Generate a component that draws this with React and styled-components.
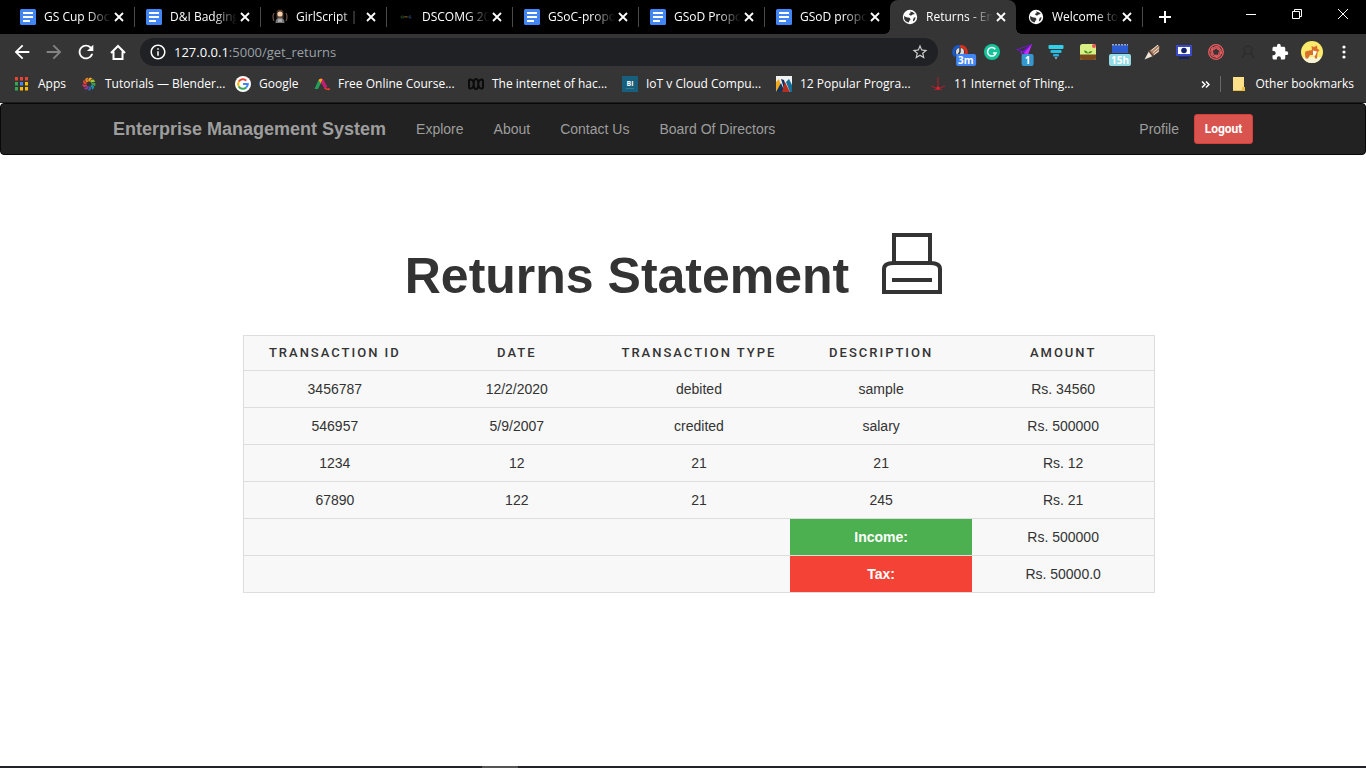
import React from "react"
import styled, { createGlobalStyle, css } from "styled-components"
import {
  MdArrowBack,
  MdArrowForward,
  MdExtension,
  MdInfoOutline,
  MdOutlineHome,
  MdRefresh,
  MdStarBorder,
} from "react-icons/md"

const GlobalStyle = createGlobalStyle`
  * {
    box-sizing: border-box;
  }

  body {
    margin: 0;
    background: #fff;
    color: #333;
    font-family: "Liberation Sans", Arial, sans-serif;
    font-size: 14px;
    line-height: 20px;
  }

  svg {
    flex: none;
  }
`

const Screen = styled.div`
  min-height: 100vh;
  display: flex;
  flex-direction: column;
`

/* browser frame */

const Browser = styled.header`
  background: #353535;
  border-bottom: 1px solid #1c1c1c;
  color: #fff;
  font-family: "Open Sans", "Noto Sans", sans-serif;
  font-size: 12px;
  line-height: 16px;
`

const IconButton = styled.button`
  display: flex;
  align-items: center;
  justify-content: center;
  flex: none;
  width: ${(p) => p.$width || 16}px;
  height: ${(p) => p.$height || 16}px;
  padding: 0;
  border: 0;
  background: transparent;
  color: ${(p) => p.$color || "#fff"};
`

const TabStrip = styled.div`
  display: flex;
  height: 34px;
  padding-left: 8px;
  background: #000;
`

const Tab = styled.div`
  position: relative;
  display: flex;
  align-items: center;
  flex: 0 1 126px;
  min-width: 0;
  padding: 0 7px 0 12px;

  &::after {
    content: "";
    position: absolute;
    right: -1px;
    top: 7px;
    width: 1px;
    height: 20px;
    background: ${(p) => (p.$noLine ? "transparent" : "#4a4a4a")};
  }

  ${(p) =>
    p.$active &&
    css`
      background: #353535;
      border-radius: 8px 8px 0 0;

      &::before,
      &::after {
        content: "";
        position: absolute;
        top: auto;
        bottom: 0;
        width: 6px;
        height: 6px;
      }

      &::before {
        left: -6px;
        background: radial-gradient(circle at 0 0, transparent 6px, #353535 6px);
      }

      &::after {
        right: -6px;
        background: radial-gradient(circle at 100% 0, transparent 6px, #353535 6px);
      }
    `}
`

const TabTitle = styled.span`
  flex: 1;
  min-width: 0;
  margin-left: 8px;
  overflow: hidden;
  white-space: nowrap;
  mask-image: linear-gradient(to right, #000 65%, transparent 100%);
`

const WindowButtons = styled.div`
  display: flex;
  height: 28px;
  margin-left: auto;
`

const Toolbar = styled.div`
  display: flex;
  align-items: center;
  height: 36px;
  padding: 0 14px;
`

const NavButtons = styled.div`
  display: flex;
  gap: 16px;
  margin-right: 14px;
`

const AddressBar = styled.div`
  display: flex;
  align-items: center;
  flex: 1;
  height: 28px;
  padding: 0 10px;
  border-radius: 14px;
  background: #202124;
`

const Address = styled.div`
  flex: 1;
  margin-left: 8px;
  font-size: 13px;
  line-height: 20px;
  color: #9aa0a6;

  b {
    font-weight: 400;
    color: #fff;
  }
`

const Extensions = styled.div`
  display: flex;
  align-items: center;
  gap: 16px;
  margin-left: 14px;
`

const Extension = styled.div`
  position: relative;
  display: flex;
  align-items: center;
  justify-content: center;
  width: 16px;
  height: 16px;
`

const Badge = styled.span`
  position: absolute;
  top: 10px;
  left: 50%;
  min-width: 12px;
  padding: 0 2px;
  border-radius: 2px;
  background: ${(p) => p.$color};
  font-size: 10px;
  font-weight: 700;
  line-height: 12px;
  text-align: center;
  transform: translateX(${(p) => (p.$wide ? "-50%" : "-20%")});
`

const Bookmarks = styled.nav`
  display: flex;
  align-items: center;
  height: 32px;
  padding: 0 12px 4px 14px;
`

const Bookmark = styled.a`
  display: flex;
  align-items: center;
  flex: none;
  gap: 8px;
  width: ${(p) => (p.$width ? `${p.$width}px` : "auto")};
  color: #fff;
  text-decoration: none;
  white-space: nowrap;
`

const BookmarksEnd = styled.div`
  display: flex;
  align-items: center;
  gap: 10px;
  margin-left: auto;
`

const Line = styled.span`
  width: 1px;
  height: 16px;
  background: #686868;
`

/* site */

const Navbar = styled.nav`
  border: 1px solid #080808;
  border-radius: 4px;
  background: #222;
`

const NavbarInner = styled.div`
  display: flex;
  align-items: center;
  max-width: 1170px;
  height: 50px;
  margin: 0 auto;
  padding: 0 15px;
`

const Brand = styled.a`
  margin-right: 30px;
  color: #9d9d9d;
  font-size: 18px;
  font-weight: 700;
  text-decoration: none;
`

const NavLinks = styled.div`
  display: flex;
  flex: 1;
  gap: 30px;
`

const NavLink = styled.a`
  color: #9d9d9d;
  text-decoration: none;
`

const Logout = styled.button`
  width: 59px;
  height: 30px;
  margin-left: 15px;
  padding: 0;
  border: 1px solid #d43f3a;
  border-radius: 3px;
  background: #d9534f;
  color: #fff;
  font-family: Roboto, sans-serif;
  font-size: 12px;
  font-weight: 700;
  line-height: 18px;
`

const Main = styled.main`
  flex: 1;
  width: 100%;
  max-width: 1172px;
  margin: 0 auto;
  padding: 75px 0 0 32px;
`

const Heading = styled.div`
  display: flex;
  align-items: flex-end;
  justify-content: center;
  gap: 32px;
  height: 64px;
  margin-right: 50px;
`

const Title = styled.h1`
  margin: 0 0 -10px;
  font-size: 50px;
  font-weight: 700;
  line-height: 55px;
`

const Statement = styled.table`
  width: 80%;
  margin: 41px auto 0;
  table-layout: fixed;
  border-collapse: collapse;
  border: 1px solid #ddd;
  background: #f8f8f8;
  text-align: center;
`

const Row = styled.tr`
  border-top: 1px solid #ddd;
`

const HeadCell = styled.th`
  padding: 8px 0;
  font-family: Roboto, sans-serif;
  font-size: 13px;
  font-weight: 500;
  line-height: 18px;
  letter-spacing: 2px;
  text-transform: uppercase;
  white-space: nowrap;
`

const Cell = styled.td`
  padding: 8px;
`

const TotalCell = styled.th`
  padding: 8px;
  background: ${(p) => p.$color};
  color: #fff;
`

const Taskbar = styled.footer`
  display: flex;
  height: 2px;
  padding-left: 482px;
  background: #222326;

  &::before {
    content: "";
    width: 36px;
    background: #555;
  }
`

const Icon = ({ size = 16, box = 16, children }) => (
  <svg width={size} height={size} viewBox={`0 0 ${box} ${box}`} fill="none" aria-hidden="true">
    {children}
  </svg>
)

const DocIcon = () => (
  <Icon>
    <rect width="16" height="16" rx="1.5" fill="#4285f4" />
    <path d="M3 4h10M3 8h10M3 12h7" stroke="#fff" strokeWidth="1.8" />
  </Icon>
)

const GirlIcon = () => (
  <Icon>
    <path d="M2 4q-2 4 0 8M14 4q2 4 0 8" stroke="#6b5248" strokeWidth="1.2" />
    <path d="M4.500 9V4q0-3.500 3.500-3.500T11.500 4v5z" fill="#513529" />
    <circle cx="8" cy="5" r="2.600" fill="#f3d0aa" />
    <path d="M3.500 14q0-5.500 4.500-5.500t4.500 5.500z" fill="#777" />
    <path d="M6 10h4v3H6z" fill="#a9a9a9" />
  </Icon>
)

const OmgIcon = () => (
  <Icon>
    <ellipse cx="4.500" cy="8" rx="1.600" ry="1" stroke="#24482a" />
    <path d="M7 9V7l1 1 1-1v2" stroke="#5c4518" />
    <path d="M13 7h-2v2h2V8" stroke="#213963" />
  </Icon>
)

const GlobeIcon = () => (
  <Icon>
    <circle cx="8" cy="8" r="7.200" fill="#fff" />
    <path d="M2.300 6.800q1.500 2 3.700 1.800 2 0 2.400 1.300.2 1.500-1 1.700l-.6 2q-3.800-.4-4.700-4z" fill="#333" />
    <path d="M8 2.400q3.300-.1 4.900 2.600l-2.300.4q-.5 1.200-2.200 1.100L7 5.600q.2-1.200 1.800-1.500z" fill="#333" />
    <path d="M13.600 8.200q-.2 2.800-2.300 4.400-.8-1.400.1-2.600 0-1.300 1-1.600z" fill="#333" />
  </Icon>
)

const CloseIcon = () => (
  <Icon size={10} box={10}>
    <path d="M1 1l8 8M9 1L1 9" stroke="#fff" strokeWidth="1.8" />
  </Icon>
)

const BlenderIcon = () => (
  <Icon>
    {["#f7a325", "#a7cf38", "#43a047", "#1c95a6", "#2f69b2", "#8b3b9b", "#d92f68", "#e8452d", "#f08a24"].map(
      (color, i) => (
        <path key={color} d="M7.500 5.500Q6.500 3 9 1.500l2.500 1Q9 3.500 9.200 5.500z" fill={color} transform={`rotate(${i * 40} 8 8)`} />
      )
    )}
  </Icon>
)

const GoogleIcon = () => (
  <Icon>
    <circle cx="8" cy="8" r="8" fill="#fff" />
    <path d="M3.800 5.600A4.800 4.800 0 0 1 11.300 4.600" stroke="#ea4335" strokeWidth="2" />
    <path d="M3.800 10.400a4.800 4.800 0 0 1 0-4.800" stroke="#fbbc05" strokeWidth="2" />
    <path d="M11.200 11.500a4.800 4.800 0 0 1-7.400-1.100" stroke="#34a853" strokeWidth="2" />
    <path d="M8 8h4.800q0 2.200-1.600 3.500" stroke="#4285f4" strokeWidth="2" />
  </Icon>
)

const ArchIcon = () => (
  <Icon>
    <path d="M.5 13L4.500 4l2.500 3-3 6z" fill="#22a05a" />
    <path d="M4.500 4Q6 2 8.500 3L7 7.500z" fill="#f6b51e" />
    <path d="M5.500 3q3-1.500 4.500 1.500l3.500 6.500-3 1.500L6.500 6z" fill="#c21e72" />
    <path d="M5 3.500q2-1.500 3.500 0L6.500 7z" fill="#f4a81e" />
    <path d="M10.500 11.500q2.500 1.500 5 .5l.5 2q-3.500.5-5.500-1z" fill="#ef3b2c" />
  </Icon>
)

const WavesIcon = () => (
  <Icon>
    <path
      d="M1 3.500Q5.700 3 5.700 8T8 13t2.300-5T15 3.500M1 12.500Q5.700 13 5.700 8T8 3t2.300 5T15 12.500M1 3.500v9M15 3.500v9"
      stroke="#0b0b0b"
      strokeWidth="2"
    />
  </Icon>
)

const BiIcon = () => (
  <Icon>
    <rect width="16" height="16" fill="#185f7d" />
    <text x="8" y="10" fill="#fff" fontSize="7" fontWeight="700" textAnchor="middle">
      BI
    </text>
    <path d="M4 12.500h8" stroke="#3d7b94" />
  </Icon>
)

const PeaksIcon = () => (
  <Icon>
    <rect width="16" height="16" fill="#f1f1f1" />
    <path d="M0 6l3-3 4 13H0z" fill="#f2a922" />
    <path d="M0 16l5-9 4 9z" fill="#12335e" />
    <path d="M5 3l3 1 4 12H9z" fill="#12335e" />
    <path d="M6 16l3-10 5 10z" fill="#b52d1c" />
    <path d="M10 6l3-3 3 6v7h-2z" fill="#146f9b" />
  </Icon>
)

const StarburstIcon = () => (
  <Icon>
    <path d="M8 1v12M1 10l7 3 7-3M4 14l4-1 4 1" stroke="#b01e2c" />
    <circle cx="8" cy="12" r="1.500" fill="#e8232f" />
  </Icon>
)

const AppsIcon = () => (
  <Icon>
    {["#ea4335", "#ea4335", "#ea4335", "#34a853", "#4285f4", "#fbbc05", "#34a853", "#fbbc05", "#fbbc05"].map(
      (color, i) => (
        <rect key={i} x={(i % 3) * 5 + 1} y={Math.floor(i / 3) * 5 + 1} width="3" height="3.500" fill={color} />
      )
    )}
  </Icon>
)

const FolderIcon = () => (
  <Icon>
    <path d="M2 1h11v14H2z" fill="#ffe18a" />
    <path d="M11 11h3v4h-3z" fill="#e9bf45" />
    <path d="M2 14.500h10" stroke="#e9bf45" />
  </Icon>
)

const PrinterIcon = () => (
  <svg width="62" height="62" viewBox="0 0 62 62" fill="none" stroke="#333" strokeWidth="4" aria-hidden="true">
    <path d="M13 30V3h36v27" />
    <path d="M3 60V37q0-6 10-6h36q10 0 10 6v23z" />
    <path d="M11 48h40" />
  </svg>
)

const tabs = [
  { title: "GS Cup Doc", icon: <DocIcon /> },
  { title: "D&I Badging", icon: <DocIcon /> },
  { title: "GirlScript | Ho", icon: <GirlIcon /> },
  { title: "DSCOMG 20", icon: <OmgIcon /> },
  { title: "GSoC-propo", icon: <DocIcon /> },
  { title: "GSoD Propo", icon: <DocIcon /> },
  { title: "GSoD propo", icon: <DocIcon />, noLine: true },
  { title: "Returns - Ent", icon: <GlobeIcon />, active: true, noLine: true },
  { title: "Welcome to", icon: <GlobeIcon /> },
]

const bookmarks = [
  { title: "Apps", icon: <AppsIcon />, width: 67 },
  { title: "Tutorials — Blender...", icon: <BlenderIcon />, width: 154 },
  { title: "Google", icon: <GoogleIcon />, width: 79 },
  { title: "Free Online Course...", icon: <ArchIcon />, width: 154 },
  { title: "The internet of hac...", icon: <WavesIcon />, width: 154 },
  { title: "IoT v Cloud Compu...", icon: <BiIcon />, width: 154 },
  { title: "12 Popular Progra...", icon: <PeaksIcon />, width: 154 },
  { title: "11 Internet of Thing...", icon: <StarburstIcon />, width: 154 },
]

const columns = ["Transaction ID", "Date", "Transaction Type", "Description", "Amount"]

const transactions = [
  ["3456787", "12/2/2020", "debited", "sample", "Rs. 34560"],
  ["546957", "5/9/2007", "credited", "salary", "Rs. 500000"],
  ["1234", "12", "21", "21", "Rs. 12"],
  ["67890", "122", "21", "245", "Rs. 21"],
]

const totals = [
  { label: "Income:", amount: "Rs. 500000", color: "#4caf50" },
  { label: "Tax:", amount: "Rs. 50000.0", color: "#f44336" },
]

const Avatar = styled.button`
  display: flex;
  margin: 0 -3px;
  padding: 0;
  border: 0;
  background: transparent;
`

const BrowserFrame = () => (
  <Browser>
    <TabStrip>
      {tabs.map((tab) => (
        <Tab key={tab.title} $active={tab.active} $noLine={tab.noLine}>
          {tab.icon}
          <TabTitle>{tab.title}</TabTitle>
          <IconButton aria-label="Close tab">
            <CloseIcon />
          </IconButton>
        </Tab>
      ))}
      <IconButton $width={46} $height={34} aria-label="New tab">
        <Icon size={12} box={12}>
          <path d="M6 0v12M0 6h12" stroke="#fff" strokeWidth="2" />
        </Icon>
      </IconButton>
      <WindowButtons>
        <IconButton $width={46} $height={28} aria-label="Minimize">
          <Icon size={10} box={10}>
            <path d="M0 5.500h10" stroke="#fff" />
          </Icon>
        </IconButton>
        <IconButton $width={46} $height={28} aria-label="Restore">
          <Icon size={10} box={10}>
            <path d="M.5 2.500h7v7h-7zM2.500 2.500v-2h7v7h-2" stroke="#fff" />
          </Icon>
        </IconButton>
        <IconButton $width={46} $height={28} aria-label="Close">
          <Icon size={10} box={10}>
            <path d="M0 0l10 10M10 0L0 10" stroke="#fff" />
          </Icon>
        </IconButton>
      </WindowButtons>
    </TabStrip>

    <Toolbar>
      <NavButtons>
        <IconButton aria-label="Back">
          <MdArrowBack size={22} />
        </IconButton>
        <IconButton $color="#848484" aria-label="Forward">
          <MdArrowForward size={22} />
        </IconButton>
        <IconButton aria-label="Reload">
          <MdRefresh size={22} />
        </IconButton>
        <IconButton aria-label="Home">
          <Icon>
            <path d="M1 9l7-7 7 7M3.500 7.500V15h9V7.500" stroke="#fff" strokeWidth="2" />
          </Icon>
        </IconButton>
      </NavButtons>
      <AddressBar>
        <IconButton aria-label="Site information">
          <MdInfoOutline size={18} />
        </IconButton>
        <Address>
          <b>127.0.0.1</b>:5000/get_returns
        </Address>
        <IconButton $color="#ccc" aria-label="Bookmark this page">
          <MdStarBorder size={18} />
        </IconButton>
      </AddressBar>
      <Extensions>
        <Extension>
          <Icon>
            <path d="M8 2.500A5.500 5.500 0 0 0 3.500 12" stroke="#1a56c4" strokeWidth="3" />
            <path d="M8 2.500A5.500 5.500 0 0 1 12.500 12" stroke="#d2301f" strokeWidth="3" />
            <circle cx="8" cy="8" r="4" fill="#ddd" />
            <path d="M8 4v4L6 11" stroke="#333" strokeWidth="1.500" />
          </Icon>
          <Badge $color="#4285f4">3m</Badge>
        </Extension>
        <Extension>
          <Icon>
            <circle cx="8" cy="8" r="8" fill="#15c39a" />
            <path d="M11.300 5.200A4.300 4.300 0 1 0 12 9H9" stroke="#fff" strokeWidth="1.500" />
          </Icon>
        </Extension>
        <Extension>
          <Icon>
            <path d="M0 5.500L16 0l-4.500 12-3.500-3z" fill="#7a12e8" />
            <path d="M8 9l8-9-4.500 12z" fill="#c531f5" />
            <path d="M2 5.800L14 1.500 6 7.500z" fill="#353535" />
            <path d="M5 7l2 6 2-4" stroke="#8f22ee" strokeWidth="1.200" />
          </Icon>
          <Badge $color="#3498cf">1</Badge>
        </Extension>
        <Extension>
          <Icon>
            <rect x=".5" y="1" width="15" height="4" rx="1" fill="#2ed0ea" />
            <rect x="2.500" y="6" width="11" height="3" rx="1" fill="#2abfe2" />
            <rect x="5" y="10" width="6" height="2.500" rx="1" fill="#2aaedb" />
            <path d="M6.500 13.500h3L8 15.200z" fill="#aeeefa" />
          </Icon>
        </Extension>
        <Extension>
          <Icon>
            <rect width="16" height="16" rx="2.500" fill="#d8ef84" />
            <path d="M0 10.500h16v3q0 2.500-2.500 2.500h-11Q0 16 0 13.500z" fill="#7a4a1e" />
            <path d="M8 9.500Q4.500 9.500 4 6.500q3.500 0 4 3 .5-2.500 4-2.500 0 2.500-4 2.500z" fill="#3f8d25" />
            <circle cx="14" cy="2" r="2" fill="#f0525a" />
          </Icon>
        </Extension>
        <Extension>
          <Icon>
            <path d="M0 1h16v8H0z" fill="#2d5bd0" />
            <path d="M0 .7h16" stroke="#9ba7c6" strokeWidth="1.400" strokeDasharray="2 1" />
          </Icon>
          <Badge $color="#93dce5" $wide>
            15h
          </Badge>
        </Extension>
        <Extension>
          <Icon>
            <path d="M.5 15.500L5 7l4 5z" fill="#f1e4d8" />
            <path d="M5 7l9-6 1.500 1.500L15 8l-6 4z" fill="#a87c5f" />
            <path d="M7.500 6.500L14 1M9 8.500l6-5M10 10.500l5-4" stroke="#f5ece4" />
            <path d="M5 7l4 5" stroke="#5b3f35" strokeWidth="1.500" />
          </Icon>
        </Extension>
        <Extension>
          <Icon>
            <path d="M1 2h14v9H1z" fill="#fff" stroke="#3949c9" strokeWidth="2" />
            <circle cx="8" cy="6.500" r="2.800" fill="#14216e" />
            <path d="M3 14h10" stroke="#14216e" strokeWidth="2" />
          </Icon>
        </Extension>
        <Extension>
          <Icon>
            <circle cx="8" cy="8" r="7.300" stroke="#f15b5f" strokeWidth="1.300" />
            {[0, 72, 144, 216, 288].map((angle) => (
              <path
                key={angle}
                d="M5.500 6.200Q7.500 2.800 11.500 4.500q2.500 1.800 1.800 5.500"
                stroke="#f15b5f"
                strokeWidth="1.100"
                transform={`rotate(${angle} 8 8)`}
              />
            ))}
          </Icon>
        </Extension>
        <Extension>
          <Icon>
            <circle cx="8" cy="6" r="4" stroke="#2d2d2d" strokeWidth="1.500" />
            <path d="M5 9l-3 5M11 9l3 5" stroke="#2d2d2d" strokeWidth="1.500" />
          </Icon>
        </Extension>
        <IconButton aria-label="Extensions">
          <MdExtension size={18} />
        </IconButton>
        <Avatar aria-label="Profile">
          <Icon size={22} box={22}>
            <circle cx="11" cy="11" r="11" fill="#fae96b" />
            <path d="M1.500 16h19q-3 6-9.500 6t-9.500-6z" fill="#f7f3d5" />
            <path d="M4.500 17.500L4 12q0-2 2-2l5-1-.5-4L13 6l3-1.500.5 3.500 2 1-2 2.500-.5 6h-2l-.5-3.500H9L7 17.500z" fill="#d8702b" />
            <path d="M12 9.500l4 1-2 4.500-2-1z" fill="#fff" />
          </Icon>
        </Avatar>
        <IconButton aria-label="Menu">
          <Icon>
            <circle cx="8" cy="3" r="1.600" fill="#fff" />
            <circle cx="8" cy="8" r="1.600" fill="#fff" />
            <circle cx="8" cy="13" r="1.600" fill="#fff" />
          </Icon>
        </IconButton>
      </Extensions>
    </Toolbar>

    <Bookmarks>
      {bookmarks.map((mark) => (
        <Bookmark key={mark.title} href="#" $width={mark.width}>
          {mark.icon}
          {mark.title}
        </Bookmark>
      ))}
      <BookmarksEnd>
        <Icon size={9} box={9}>
          <path d="M1 1.500l3 3-3 3M5 1.500l3 3-3 3" stroke="#fff" strokeWidth="1.500" />
        </Icon>
        <Line />
        <Bookmark href="#">
          <FolderIcon />
          Other bookmarks
        </Bookmark>
      </BookmarksEnd>
    </Bookmarks>
  </Browser>
)

const App = () => (
  <Screen>
    <GlobalStyle />
    <BrowserFrame />
    <Navbar>
      <NavbarInner>
        <Brand href="#">Enterprise Management System</Brand>
        <NavLinks>
          <NavLink href="#">Explore</NavLink>
          <NavLink href="#">About</NavLink>
          <NavLink href="#">Contact Us</NavLink>
          <NavLink href="#">Board Of Directors</NavLink>
        </NavLinks>
        <NavLink href="#">Profile</NavLink>
        <Logout>Logout</Logout>
      </NavbarInner>
    </Navbar>
    <Main>
      <Heading>
        <Title>Returns Statement</Title>
        <PrinterIcon />
      </Heading>
      <Statement>
        <thead>
          <tr>
            {columns.map((name) => (
              <HeadCell key={name} scope="col">
                {name}
              </HeadCell>
            ))}
          </tr>
        </thead>
        <tbody>
          {transactions.map((row) => (
            <Row key={row[0]}>
              {row.map((value, i) => (
                <Cell key={i}>{value}</Cell>
              ))}
            </Row>
          ))}
          {totals.map((total) => (
            <Row key={total.label}>
              <Cell colSpan={3} />
              <TotalCell scope="row" $color={total.color}>
                {total.label}
              </TotalCell>
              <Cell>{total.amount}</Cell>
            </Row>
          ))}
        </tbody>
      </Statement>
    </Main>
    <Taskbar />
  </Screen>
)

export default App
